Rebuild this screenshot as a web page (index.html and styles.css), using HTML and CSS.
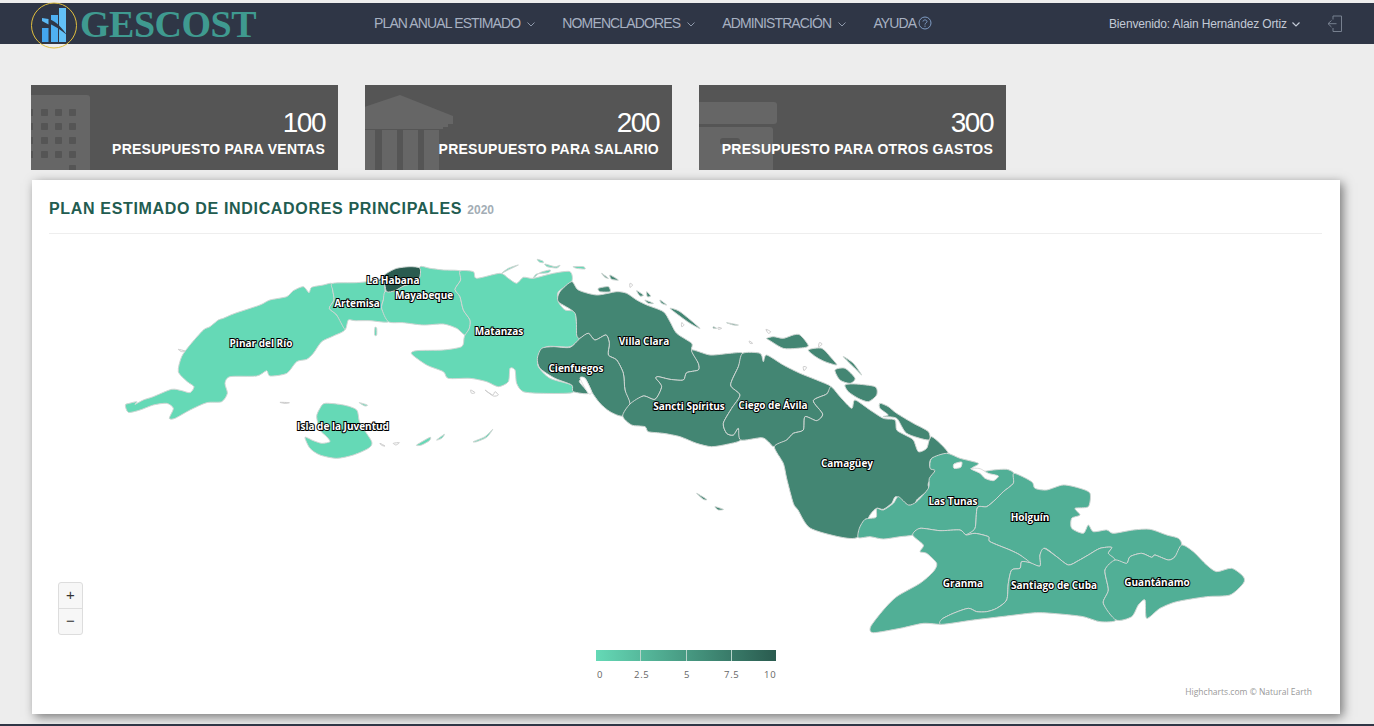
FILE: index.html
```html
<!DOCTYPE html>
<html>
	<head>
		<meta charset="utf-8">
		<title>GESCOST</title>
		<link rel="stylesheet" href="styles.css">
	</head>
	<body>
		<div class="topbar">
			<div class="brand">
				<svg class="brand-mark" width="48" height="48" viewBox="0 0 48 48">
					<circle cx="23" cy="23.5" r="22.5" fill="none" stroke="#e0bf3e" stroke-width="1"/>
					<rect x="11" y="26" width="6.500" height="14" fill="#44a6ee"/>
					<rect x="20" y="13" width="7" height="27" fill="#4fb0f2"/>
					<rect x="28" y="6" width="7" height="34" fill="#62c0f7"/>
					<path d="M10 16 L18 17 C26 20 31 26 36 33 C30 28 24 24 17 21 Z" fill="#2f3646"/>
					<path d="M11 16 L17.500 17 L17.500 22.500 L11 19 Z" fill="#5ab8f4"/>
				</svg>
				<span class="brand-name">GESCOST</span>
			</div>
			<ul class="menu">
				<li class="menu-item">PLAN ANUAL ESTIMADO <svg class="chev" width="8" height="5" viewBox="0 0 8 5"><path d="M.5.5 4 4 7.5.5" fill="none" stroke="#8e99ab"/></svg></li>
				<li class="menu-item">NOMENCLADORES <svg class="chev" width="8" height="5" viewBox="0 0 8 5"><path d="M.5.5 4 4 7.5.5" fill="none" stroke="#8e99ab"/></svg></li>
				<li class="menu-item">ADMINISTRACIÓN <svg class="chev" width="8" height="5" viewBox="0 0 8 5"><path d="M.5.5 4 4 7.5.5" fill="none" stroke="#8e99ab"/></svg></li>
				<li class="menu-item">AYUDA
					<svg class="help" width="14" height="14" viewBox="0 0 14 14"><circle cx="7" cy="7" r="6" fill="none" stroke="#7f9cc4"/><path d="M5 5.5C5 3.4 9 3.4 9 5.5 9 7 7 6.8 7 8.6M7 9.6V10.8" fill="none" stroke="#7f9cc4"/></svg>
				</li>
			</ul>
			<div class="user">Bienvenido: Alain Hernández Ortiz <svg class="chev user-chev" width="8" height="5" viewBox="0 0 8 5"><path d="M.5.5 4 4 7.5.5" fill="none" stroke="#c3cad6" stroke-width="1.2"/></svg></div>
			<svg class="logout" width="16" height="18" viewBox="0 0 16 18"><path d="M6 4.500V1H14.500V16.500H6V13M9.500 8.700H1M4.500 5.500 1 8.700 4.500 12" fill="none" stroke="#77808f"/></svg>
		</div>

		<div class="cards">
			<div class="card">
				<svg class="card-icon" width="307" height="85" viewBox="0 0 307 85">
					<rect x="-40" y="10" width="99" height="90" rx="3" fill="#666"/>
					<g fill="#555">
						<rect x="-3" y="24" width="5" height="7"/><rect x="10" y="24" width="7" height="7" rx="1"/><rect x="24" y="24" width="7" height="7" rx="1"/><rect x="38" y="24" width="7" height="7" rx="1"/>
						<rect x="-3" y="38" width="5" height="7"/><rect x="10" y="38" width="7" height="7" rx="1"/><rect x="24" y="38" width="7" height="7" rx="1"/><rect x="38" y="38" width="7" height="7" rx="1"/>
						<rect x="-3" y="52" width="5" height="7"/><rect x="10" y="52" width="7" height="7" rx="1"/><rect x="24" y="52" width="7" height="7" rx="1"/><rect x="38" y="52" width="7" height="7" rx="1"/>
						<rect x="-3" y="66" width="5" height="7"/><rect x="10" y="66" width="7" height="7" rx="1"/><rect x="24" y="66" width="7" height="7" rx="1"/><rect x="38" y="66" width="7" height="7" rx="1"/>
						<rect x="38" y="80" width="7" height="7" rx="1"/>
					</g>
				</svg>
				<div class="card-value">100</div>
				<div class="card-label">PRESUPUESTO PARA VENTAS</div>
			</div>
			<div class="card">
				<svg class="card-icon" width="307" height="85" viewBox="0 0 307 85">
					<path d="M-30 32 35 10 88 31V39H83V42H78V44H-30Z" fill="#666"/>
					<rect x="-5" y="45" width="15" height="40" fill="#666"/>
					<rect x="17" y="45" width="15" height="40" fill="#666"/>
					<rect x="38" y="45" width="15" height="40" fill="#666"/>
					<rect x="59" y="45" width="15" height="40" fill="#666"/>
				</svg>
				<div class="card-value">200</div>
				<div class="card-label">PRESUPUESTO PARA SALARIO</div>
			</div>
			<div class="card">
				<svg class="card-icon" width="307" height="85" viewBox="0 0 307 85">
					<rect x="-20" y="17" width="98" height="22" rx="3" fill="#666"/>
					<rect x="-20" y="42" width="94" height="50" rx="3" fill="#666"/>
					<rect x="21" y="53" width="20" height="7" rx="3" fill="#555"/>
				</svg>
				<div class="card-value">300</div>
				<div class="card-label">PRESUPUESTO PARA OTROS GASTOS</div>
			</div>
		</div>

		<div class="panel">
			<div class="panel-head">
				<h5 class="panel-title">PLAN ESTIMADO DE INDICADORES PRINCIPALES <small class="panel-year">2020</small></h5>
			</div>
			<div class="map">
				<svg class="map-svg" width="1308" height="480" viewBox="32 234 1308 480">
					<!-- occidente -->
					<g transform="translate(110 250) scale(.33333)">
						<path class="lvl0" d="M46 465 58 460 80 455 75 463 100 450 130 440 185 418 215 422 240 428 252 410 232 395 205 365 215 320 240 285 280 240 300 230 325 210 340 205 375 190 450 165 480 150 530 140 550 122 580 110 597 128 605 112 640 105 665 100 668 120 672 150 658 175 680 195 705 238 670 258 635 275 610 310 590 328 560 335 530 370 480 378 470 362 440 378 360 380 345 400 352 430 335 455 290 458 240 480 195 505 178 505 190 475 170 460 130 465 90 480 55 487Z"/>
						<path class="lvl0" d="M668 100 740 98 805 92 822 95 825 125 820 150 815 175 835 215 780 212 735 212 715 210 705 238 680 195 658 175 672 150 668 120Z"/>
						<path class="lvl0" d="M930 50 960 55 1000 60 1050 63 1052 90 1035 118 1050 140 1060 180 1080 210 1078 235 1065 255 1040 235 1000 222 940 225 880 218 835 215 815 175 820 150 825 125 855 122 880 108 905 100 928 85Z"/>
						<path class="lvl4" d="M805 92 830 70 860 55 900 50 930 55 928 85 905 100 880 108 855 122 830 125 822 95Z"/>
						<path class="lvl0" d="M1050 63 1090 65 1100 85 1170 70 1195 85 1220 100 1240 82 1270 85 1330 70 1380 65 1385 95 1345 125 1345 155 1365 180 1395 185 1400 225 1410 262 1380 290 1310 290 1285 320 1285 350 1320 385 1385 405 1387 428 1300 430 1240 425 1220 400 1215 360 1200 355 1195 395 1165 410 1130 395 1080 385 1015 385 1000 365 950 345 905 312 920 302 1000 300 1055 290 1062 265 1065 255 1078 235 1080 210 1060 180 1050 140 1035 118 1052 90Z"/>
						<path class="lvl0" d="M645 460 700 465 740 480 750 520 785 575 775 595 730 615 680 625 630 615 600 595 585 562 610 572 635 580 660 575 650 560 630 540 620 500 630 475Z"/>
						<path class="lvl0" d="M1175 70 1195 55 1225 45 1190 62ZM1270 85 1290 68 1320 60 1315 68 1280 72ZM1282 28 1298 33 1300 38 1288 36ZM1305 42 1335 50 1350 46 1340 54 1312 50ZM1390 50 1420 50 1425 57 1400 55ZM748 458 772 465 765 468ZM920 585 960 562 958 572 935 585ZM980 570 1003 553 995 565ZM1090 575 1125 560 1148 538 1130 562 1100 575ZM795 232 800 235 800 255 794 255Z"/>
						<path class="islet" d="M510 457 538 458 525 460ZM205 298 225 303 215 305ZM810 580 825 588 815 586ZM850 580 868 578 858 585ZM1082 420 1095 428 1085 430ZM1125 420 1150 438 1165 435 1155 425 1148 435Z"/>
					</g>
					<!-- centro -->
					<g transform="translate(530 270) scale(.33333)">
						<path class="lvl2" d="M125 35 145 60 200 75 260 65 290 70 320 90 350 105 400 125 420 155 440 190 485 220 485 240 505 280 505 300 470 308 460 330 420 328 385 320 378 325 395 350 375 388 340 378 300 402 285 360 280 310 260 270 235 255 238 220 228 195 195 210 175 190 150 205 140 195 135 130 85 95 90 65Z"/>
						<path class="lvl2" d="M150 205 175 190 195 210 228 195 238 220 235 255 260 270 280 310 285 360 300 402 278 438 240 425 210 400 185 365 165 325 148 335 175 370 130 365 125 345 75 325 30 295 22 265 35 235 70 230 120 232Z"/>
						<path class="lvl2" d="M485 240 540 255 600 250 638 250 625 290 602 345 630 375 605 415 580 460 590 490 610 495 625 475 632 510 595 522 545 530 500 520 450 500 400 490 355 485 345 470 305 465 278 438 300 402 340 378 375 388 395 350 378 325 385 320 420 328 460 330 470 308 505 300 505 280Z"/>
						<path class="lvl2" d="M638 250 690 250 700 275 710 255 760 285 810 310 860 330 903 350 890 372 850 392 878 432 860 452 825 440 820 480 790 490 770 510 733 530 715 515 695 503 632 510 625 475 610 495 590 490 580 460 605 415 630 375 602 345 625 290Z"/>
						<path class="lvl2" d="M903 350 930 380 965 415 975 390 1020 420 1060 445 1095 450 1100 480 1125 495 1150 510 1165 545 1190 535 1205 500 1255 550 1205 565 1200 590 1218 600 1195 640 1195 660 1160 690 1150 720 1100 680 1085 700 1060 718 1040 715 1020 735 984 801 930 801 840 774 804 720 790 700 770 625 760 580 733 530 770 510 790 490 820 480 825 440 860 452 878 432 850 392 890 372Z"/>
						<path class="lvl2" d="M710 205 730 200 760 205 790 195 810 195 835 228 800 235 760 235 720 212ZM835 240 875 235 905 265 920 285 885 275 860 262ZM915 300 945 295 975 325 960 340 930 330ZM945 345 975 342 1035 350 1040 375 1015 395 985 385 955 365ZM1050 400 1075 410 1100 430 1150 460 1195 485 1195 510 1130 490 1100 445 1060 440 1075 435 1050 415ZM215 10 235 25 225 22ZM240 15 265 30 245 28ZM205 55 235 50 240 65 210 65ZM320 62 340 75 330 78ZM350 65 362 78 352 80ZM345 90 370 100 355 100ZM390 90 410 105 395 100ZM420 115 450 125 510 175 480 160 445 135ZM590 158 625 165 610 165ZM550 170 560 175 550 175ZM940 260 970 280 995 315 975 295Z"/>
						<path class="islet" d="M300 40 308 45 300 52ZM455 158 462 165 455 170ZM565 172 575 175 565 178ZM708 178 722 185 715 190ZM658 213 668 220 660 220ZM820 290 830 292 822 302ZM868 218 876 222 866 232Z"/>
						<path class="lvl2" d="M500 670 530 688 520 688ZM555 710 580 718 565 720Z"/>
						<path class="sea" d="M150 325 165 325 185 365 175 370Z"/>
					</g>
					<!-- oriente -->
					<g transform="translate(840 440) scale(.33333)">
						<path class="lvl1" d="M320 40 360 55 415 70 395 85 420 95 460 90 500 88 522 100 520 130 490 155 465 180 440 200 412 203 405 265 378 285 360 270 300 272 240 265 218 285 180 290 130 297 90 290 55 293 58 265 75 238 108 232 110 205 130 210 160 190 175 170 205 195 230 185 265 145 268 115 285 92 270 85 275 55Z"/>
						<path class="lvl1" d="M522 100 575 125 585 145 620 150 670 135 720 145 750 160 745 200 705 205 720 225 695 235 695 265 730 280 745 255 760 275 800 270 820 280 880 270 930 268 980 285 1015 295 1025 315 1005 350 985 360 945 345 935 352 905 340 870 350 860 370 825 360 805 340 815 322 780 325 745 345 715 362 685 375 650 350 625 330 612 325 600 345 600 378 570 368 540 345 510 330 450 305 445 290 405 280 378 285 405 265 412 203 440 200 465 180 490 155 520 130Z"/>
						<path class="lvl1" d="M218 285 240 265 300 272 360 270 378 285 405 280 445 290 450 305 510 330 540 345 570 368 545 365 540 385 515 390 505 430 500 480 470 505 440 515 410 515 385 505 340 520 305 538 305 553 250 550 180 565 100 578 92 560 130 510 170 470 240 430 280 395 290 370 260 340 240 335 250 315Z"/>
						<path class="lvl1" d="M570 368 600 378 600 345 612 325 650 350 685 375 715 362 745 345 780 325 815 322 805 340 825 360 795 390 805 450 790 490 828 540 780 545 730 530 660 522 590 518 500 528 400 540 305 553 305 538 340 520 385 505 410 515 440 515 470 505 500 480 505 430 515 390 540 385 545 365Z"/>
						<path class="lvl1" d="M825 360 860 370 870 350 905 340 935 352 945 345 985 360 1005 350 1025 315 1060 335 1100 375 1130 395 1175 385 1210 410 1210 430 1170 465 1100 470 1010 485 960 505 920 535 915 480 895 495 875 530 828 540 790 490 805 450 795 390Z"/>
						<path class="sea" d="M342 72 365 66 362 82 342 85ZM392 86 420 86 445 100 475 108 460 122 435 115 420 100Z"/>
					</g>
					<g class="labels">
						<text x="393" y="284">La Habana</text>
						<text x="357" y="307">Artemisa</text>
						<text x="424" y="299">Mayabeque</text>
						<text x="499" y="335">Matanzas</text>
						<text x="261" y="347">Pinar del Río</text>
						<text x="343" y="430">Isla de la Juventud</text>
						<text x="644" y="345">Villa Clara</text>
						<text x="576" y="372">Cienfuegos</text>
						<text x="689" y="410">Sancti Spíritus</text>
						<text x="773" y="409">Ciego de Ávila</text>
						<text x="847" y="467">Camagüey</text>
						<text x="953" y="505">Las Tunas</text>
						<text x="1030" y="521">Holguín</text>
						<text x="963" y="587">Granma</text>
						<text x="1054" y="589">Santiago de Cuba</text>
						<text x="1157" y="586">Guantánamo</text>
					</g>
				</svg>
				<div class="zoom">
					<div class="zoom-btn">+</div>
					<div class="zoom-btn">−</div>
				</div>
				<div class="legend">
					<div class="legend-bar">
						<span class="legend-tick"></span>
						<span class="legend-tick"></span>
						<span class="legend-tick"></span>
					</div>
					<div class="legend-nums">
						<span>0</span><span>2.5</span><span>5</span><span>7.5</span><span>10</span>
					</div>
				</div>
				<div class="credits">Highcharts.com © Natural Earth</div>
			</div>
		</div>
		<div class="bottombar"></div>
		<script src="map.js"></script>
	</body>
</html>
```

FILE: styles.css
```css
html, body{
	margin: 0;
	height: 726px;
	overflow: hidden;
}
body{
	padding-top: 3px;
	box-sizing: border-box;
	background: #ededed;
	font-family: "Liberation Sans", Arial, sans-serif;
}

/* barra superior */
.topbar{
	height: 41px;
	background: #2f3646;
	display: flex;
	align-items: center;
	position: relative;
}
.brand{
	display: flex;
	align-items: center;
	margin-left: 31px;
	width: 343px;
	height: 41px;
}
.brand-mark{
	margin-top: 5px;
	flex: none;
}
.brand-name{
	font-family: "Liberation Serif", serif;
	font-size: 38px;
	font-weight: bold;
	letter-spacing: -.5px;
	color: #3f9a90;
	margin-left: 1px;
}
.menu{
	list-style: none;
	margin: 0;
	padding: 0 0 2px 0;
	display: flex;
	gap: 27px;
	flex: 1;
}
.menu-item{
	font-size: 14px;
	letter-spacing: -.87px;
	color: #a7b1c2;
}
.chev{
	margin-left: 4px;
	vertical-align: 1px;
}
.help{
	vertical-align: -2px;
}
.user{
	font-size: 12px;
	letter-spacing: -.15px;
	color: #c3cad6;
}
.user-chev{
	margin-left: 2px;
}
.logout{
	margin: 0 31px 0 27px;
}

/* tarjetas */
.cards{
	display: flex;
	gap: 27px;
	margin: 41px 0 0 31px;
}
.card{
	width: 307px;
	height: 85px;
	box-sizing: border-box;
	padding: 23px 13px 0 0;
	background: #555;
	color: white;
	text-align: right;
	position: relative;
	overflow: hidden;
}
.card-icon{
	position: absolute;
	left: 0;
	top: 0;
}
.card-value{
	position: relative;
	font-size: 28px;
	line-height: 30px;
	letter-spacing: -1.5px;
}
.card-label{
	position: relative;
	font-size: 14px;
	font-weight: bold;
	line-height: 22px;
	letter-spacing: .25px;
}

/* panel del mapa */
.panel{
	width: 1308px;
	height: 534px;
	margin: 10px 0 0 32px;
	background: white;
	box-shadow: 3px 3px 10px #777;
}
.panel-head{
	margin: 0 18px 0 17px;
	height: 54px;
	border-bottom: 1px solid #eee;
	box-sizing: border-box;
}
.panel-title{
	margin: 0;
	padding-top: 20px;
	font-size: 16px;
	line-height: 17px;
	letter-spacing: .67px;
	font-weight: bold;
	color: #225c50;
}
.panel-year{
	font-size: 12px;
	color: #a3adb5;
	letter-spacing: 0;
}
.map{
	position: relative;
	height: 480px;
}
.map-svg{
	display: block;
}
.map-svg path{
	stroke: #cfd6d3;
	stroke-width: 1px;
	vector-effect: non-scaling-stroke;
	stroke-linejoin: round;
}
.map-svg path.lvl0{ fill: #65d9b6; }
.map-svg path.lvl1{ fill: #51af96; }
.map-svg path.lvl2{ fill: #438673; }
.map-svg path.lvl4{ fill: #2a5b4f; }
.map-svg path.islet{ fill: white; stroke: #ccc; }
.map-svg path.sea{ fill: white; stroke: #ddd; }
.labels text{
	font-family: "Open Sans", sans-serif;
	font-size: 10px;
	font-weight: bold;
	fill: white;
	stroke: black;
	stroke-width: 2px;
	paint-order: stroke;
	text-anchor: middle;
}

.zoom{
	position: absolute;
	left: 26px;
	top: 348px;
	width: 25px;
	border: 1px solid #ddd;
	border-radius: 3px;
	background: #f7f7f7;
	box-sizing: border-box;
}
.zoom-btn{
	height: 25px;
	line-height: 24px;
	text-align: center;
	font-size: 15px;
	color: #333;
}
.zoom-btn + .zoom-btn{
	border-top: 1px solid #ddd;
}

.legend{
	position: absolute;
	left: 564px;
	top: 416px;
	width: 180px;
}
.legend-bar{
	height: 11px;
	background: linear-gradient(to right, #65d9b6, #2a5b4f);
	display: flex;
	justify-content: space-between;
	padding: 0 44px;
}
.legend-tick{
	width: 1px;
	height: 11px;
	background: #b8d4cb;
}
.legend-nums{
	display: grid;
	grid-template-columns: 37px 50px 40px 40px auto;
	margin: 7px 0 0 1px;
	font-family: "Open Sans", sans-serif;
	font-size: 9.5px;
	letter-spacing: .7px;
	color: #666;
}
.credits{
	position: absolute;
	right: 28px;
	top: 452px;
	font-family: "Open Sans", sans-serif;
	font-size: 8.5px;
	color: #999;
}
.bottombar{
	position: absolute;
	left: 0;
	right: 0;
	top: 724px;
	height: 2px;
	background: #2f3646;
}
```

FILE: map.js
```js
// redondea las costas: cada contorno pasa a curvas por los mismos puntos
var paths = document.querySelectorAll(".map-svg path");
for(var i = 0; i < paths.length; i++)
{
	var parts = paths[i].getAttribute("d").split("Z");
	var d = "";
	for(var j = 0; j < parts.length; j++)
	{
		var nums = parts[j].match(/[\d.]+/g);
		if(!nums) continue;
		var pts = [];
		for(var k = 0; k < nums.length; k += 2)
		{
			pts.push([parseFloat(nums[k]), parseFloat(nums[k + 1])]);
		}
		var n = pts.length;
		d += "M" + pts[0][0] + " " + pts[0][1];
		for(var k = 0; k < n; k++)
		{
			var p0 = pts[(k + n - 1) % n];
			var p1 = pts[k];
			var p2 = pts[(k + 1) % n];
			var p3 = pts[(k + 2) % n];
			d += "C" + (p1[0] + (p2[0] - p0[0]) / 8) + " " + (p1[1] + (p2[1] - p0[1]) / 8)
				+ " " + (p2[0] - (p3[0] - p1[0]) / 8) + " " + (p2[1] - (p3[1] - p1[1]) / 8)
				+ " " + p2[0] + " " + p2[1];
		}
		d += "Z";
	}
	paths[i].setAttribute("d", d);
}
```
